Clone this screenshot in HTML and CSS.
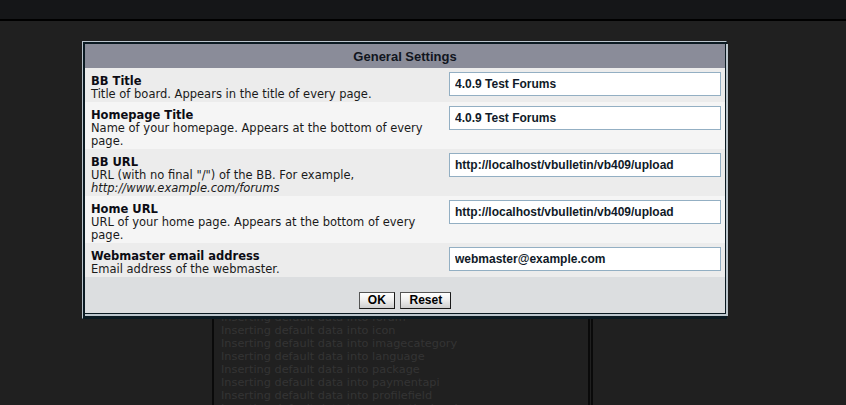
FILE: index.html
```html
<!DOCTYPE html>
<html>
<head>
<meta charset="utf-8">
<title>vBulletin Install</title>
<link rel="stylesheet" href="styles.css">
</head>
<body>
<div class="topbar"></div>
<div class="main">
  <div class="log">
    <div class="log-inner">
      <div class="log-line">Inserting default data into cron</div>
      <div class="log-line">Inserting default data into datastore</div>
      <div class="log-line">Inserting default data into faq</div>
      <div class="log-line">Inserting default data into forum</div>
      <div class="log-line">Inserting default data into icon</div>
      <div class="log-line">Inserting default data into imagecategory</div>
      <div class="log-line">Inserting default data into language</div>
      <div class="log-line">Inserting default data into package</div>
      <div class="log-line">Inserting default data into paymentapi</div>
      <div class="log-line">Inserting default data into profilefield</div>
      <div class="log-line">Inserting default data into reputationlevel</div>
    </div>
  </div>
</div>

<div class="dialog">
  <div class="dialog-frame">
    <div class="dialog-box">
      <div class="dialog-head">General Settings</div>
      <div class="row alt1">
        <div class="label-cell">
          <div class="label">BB Title</div>
          <div class="desc">Title of board. Appears in the title of every page.</div>
        </div>
        <div class="input-cell"><input class="field" type="text" value="4.0.9 Test Forums"></div>
      </div>
      <div class="row alt2">
        <div class="label-cell">
          <div class="label">Homepage Title</div>
          <div class="desc">Name of your homepage. Appears at the bottom of every page.</div>
        </div>
        <div class="input-cell"><input class="field" type="text" value="4.0.9 Test Forums"></div>
      </div>
      <div class="row alt1">
        <div class="label-cell">
          <div class="label">BB URL</div>
          <div class="desc">URL (with no final "/") of the BB. For example, <i>http://www.example.com/forums</i></div>
        </div>
        <div class="input-cell"><input class="field" type="text" value="http://localhost/vbulletin/vb409/upload"></div>
      </div>
      <div class="row alt2">
        <div class="label-cell">
          <div class="label">Home URL</div>
          <div class="desc">URL of your home page. Appears at the bottom of every page.</div>
        </div>
        <div class="input-cell"><input class="field" type="text" value="http://localhost/vbulletin/vb409/upload"></div>
      </div>
      <div class="row alt1">
        <div class="label-cell">
          <div class="label">Webmaster email address</div>
          <div class="desc">Email address of the webmaster.</div>
        </div>
        <div class="input-cell"><input class="field" type="text" value="webmaster@example.com"></div>
      </div>
      <div class="dialog-foot">
        <button class="btn" type="button">OK</button>
        <button class="btn" type="button">Reset</button>
      </div>
    </div>
  </div>
</div>
</body>
</html>
```
FILE: styles.css
```css
html, body {
  margin: 0;
  padding: 0;
  height: 100%;
  overflow: hidden;
}
body {
  background: #202020;
  font-family: "DejaVu Sans", Verdana, sans-serif;
  font-size: 11.5px;
  position: relative;
}
.topbar {
  height: 19px;
  background: #151618;
  border-bottom: 2px solid #000;
}
.main {
  padding-left: 212px;
}
.log {
  margin-top: 60px;
  width: 376px;
  border-left: 2px solid #0a0a0a;
  border-right: 2px solid #0a0a0a;
  padding-right: 1px;
}
.log-inner {
  border-right: 2px solid #0a0a0a;
  padding: 191px 0 0 7px;
}
.log-line {
  line-height: 13px;
  font-size: 11.3px;
  color: #343434;
  white-space: nowrap;
}

.dialog {
  position: absolute;
  left: 82px;
  top: 41px;
  width: 640px;
  border: 1px solid #0b1a22;
  border-top-color: #b9c3cb;
  border-left-color: #b9c3cb;
  background: #0b1a22;
  padding: 2px 1px 2px 2px;
}
.dialog-frame {
  border-right: 2px solid #bcc6cd;
  border-bottom: 2px solid #bcc6cd;
  margin-right: -3px;
}
.dialog-box {
  border-right: 1px solid #0b1a22;
  border-bottom: 1px solid #0b1a22;
  width: 640px;
}
.dialog-head {
  height: 22px;
  padding-top: 2px;
  line-height: 22px;
  background: #8a8c99;
  color: #111520;
  text-align: center;
  font-family: "Liberation Sans", Arial, sans-serif;
  font-weight: bold;
  font-size: 13px;
}
.row {
  display: grid;
  grid-template-columns: 358px 1fr;
}
.alt1 { background: #ececec; }
.alt2 { background: #f5f5f5; }
.label-cell {
  padding: 7px 6px 1px;
  line-height: 13px;
  color: #1a1a1a;
}
.label {
  font-weight: bold;
  color: #0c0c14;
}
.desc i {
  font-style: italic;
}
.input-cell {
  padding: 4px 4px 4px 6px;
}
.field {
  display: block;
  box-sizing: border-box;
  width: 272px;
  height: 24px;
  margin: 0;
  border: 1px solid #93afc3;
  background: #fff;
  padding: 0 5px;
  font-family: "Liberation Sans", Arial, sans-serif;
  font-weight: bold;
  font-size: 12px;
  color: #101a28;
  outline: none;
}
.dialog-foot {
  background: #dcdee0;
  height: 36px;
  box-sizing: border-box;
  padding-top: 15px;
  text-align: center;
}
.btn {
  height: 17px;
  margin: 0 1px;
  padding: 0 8px;
  border: 1px solid #1a1a1a;
  border-top-color: #555;
  border-left-color: #555;
  background: linear-gradient(#ffffff, #f0f0f0 45%, #cfcfcf);
  font-family: "Liberation Sans", Arial, sans-serif;
  font-weight: bold;
  font-size: 12px;
  line-height: 15px;
  color: #000;
  vertical-align: top;
}
```
